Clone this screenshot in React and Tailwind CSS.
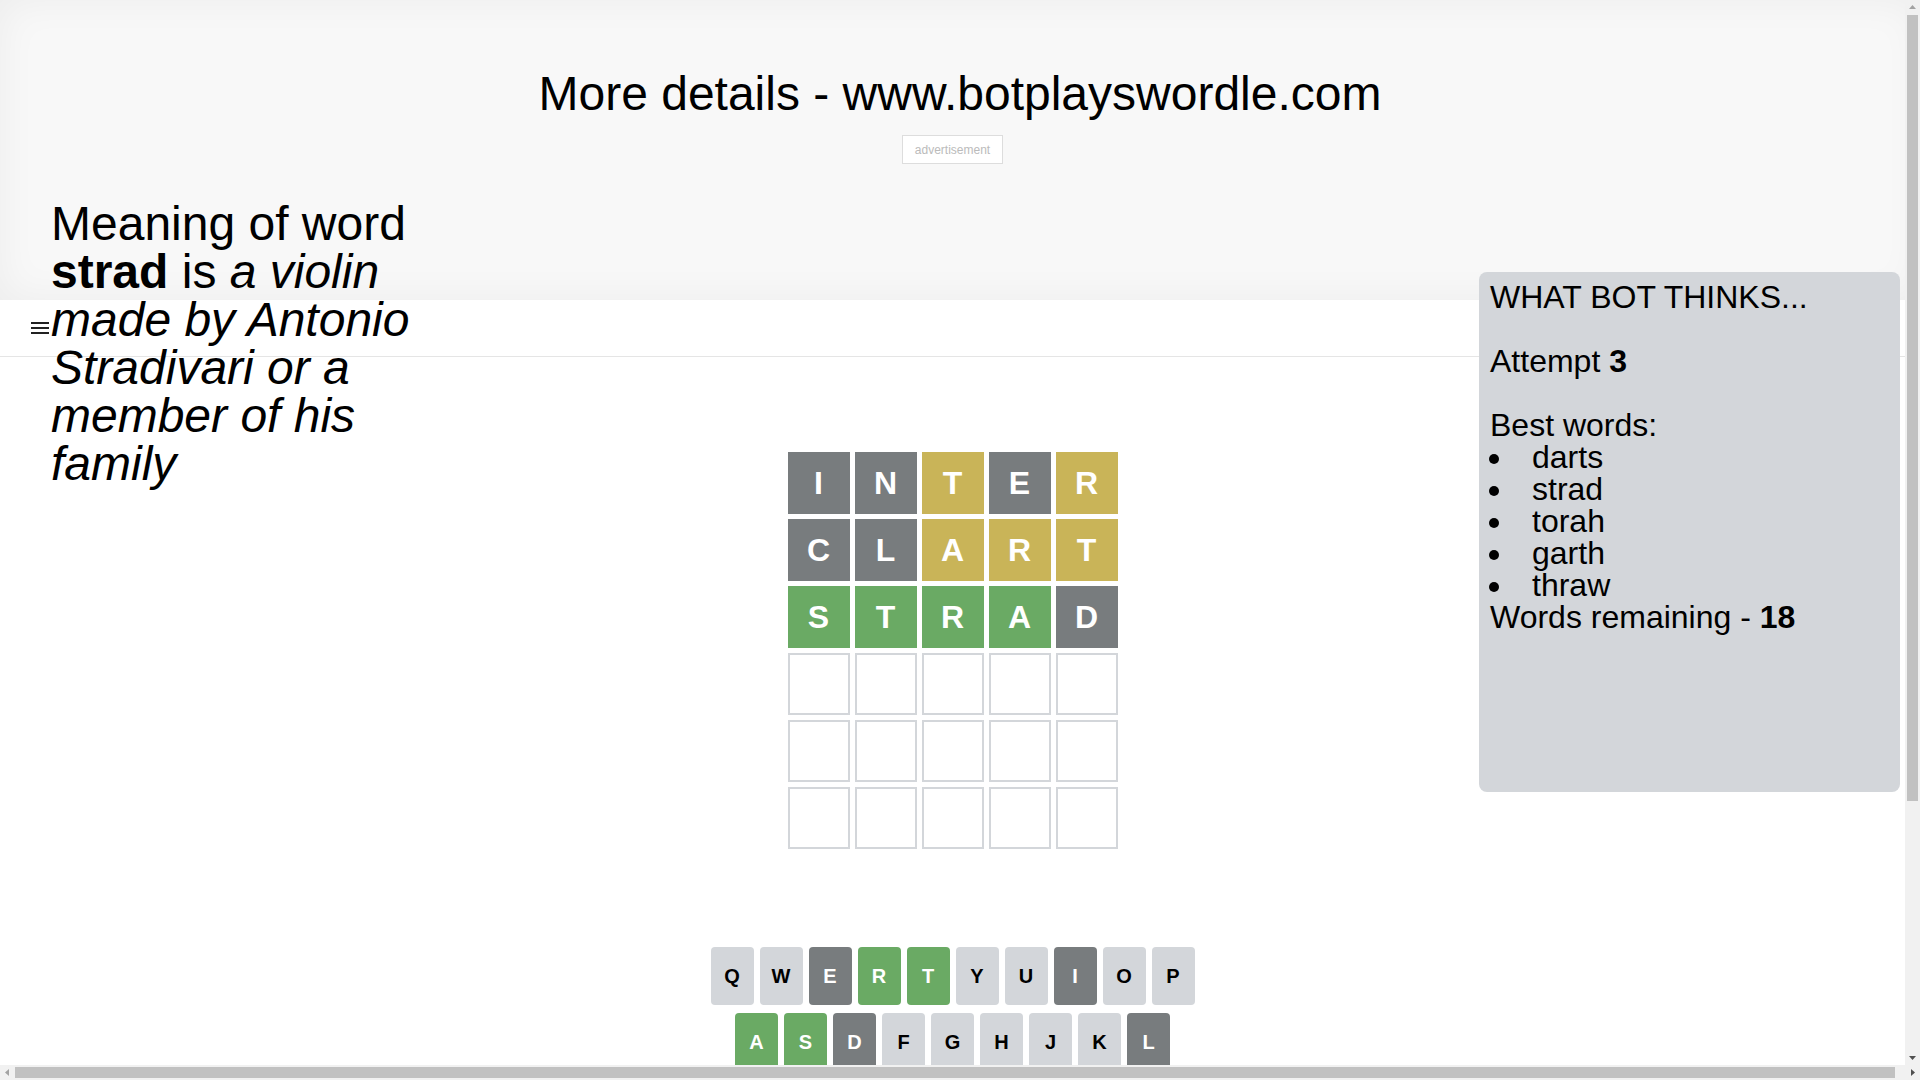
import React from "react";

const GRAY = "bg-[#787c7e] border-[#787c7e] text-white";
const YELLOW = "bg-[#c9b458] border-[#c9b458] text-white";
const GREEN = "bg-[#6aaa64] border-[#6aaa64] text-white";

const guesses = [
  [["I", GRAY], ["N", GRAY], ["T", YELLOW], ["E", GRAY], ["R", YELLOW]],
  [["C", GRAY], ["L", GRAY], ["A", YELLOW], ["R", YELLOW], ["T", YELLOW]],
  [["S", GREEN], ["T", GREEN], ["R", GREEN], ["A", GREEN], ["D", GRAY]],
];

const keyColors = {
  E: "gray", I: "gray", D: "gray", L: "gray", N: "gray", C: "gray",
  R: "green", T: "green", A: "green", S: "green",
};

const keyClass = (k) => {
  const c = keyColors[k];
  if (c === "gray") return "bg-[#787c7e] text-white";
  if (c === "green") return "bg-[#6aaa64] text-white";
  return "bg-[#d3d6da] text-black";
};

const rows = [
  ["Q", "W", "E", "R", "T", "Y", "U", "I", "O", "P"],
  ["A", "S", "D", "F", "G", "H", "J", "K", "L"],
  ["ENTER", "Z", "X", "C", "V", "B", "N", "M", "⌫"],
];

const bestWords = ["darts", "strad", "torah", "garth", "thraw"];

// little scrollbar arrow, points: up / down / left / right
const Arrow = ({ dir, color }) => {
  const pts = {
    up: "4,9 11,9 7.5,5",
    down: "4,6 11,6 7.5,10",
    left: "9,4 9,11 5,7.5",
    right: "6,4 6,11 10,7.5",
  }[dir];
  return (
    <svg width="15" height="15" viewBox="0 0 15 15" className="shrink-0">
      <polygon points={pts} fill={color} />
    </svg>
  );
};

const Tile = ({ letter, color }) => (
  <div
    className={`w-[62px] h-[62px] border-2 flex items-center justify-center text-[32px] font-bold leading-none ${
      color || "border-[#d3d6da] bg-white"
    }`}
  >
    {letter}
  </div>
);

const Board = () => {
  const all = [...guesses];
  while (all.length < 6) all.push([null, null, null, null, null]);
  return (
    <div className="grid grid-rows-6 gap-[5px] w-[330px] mx-auto">
      {all.map((row, i) => (
        <div key={i} className="grid grid-cols-5 gap-[5px]">
          {row.map((cell, j) =>
            cell ? <Tile key={j} letter={cell[0]} color={cell[1]} /> : <Tile key={j} />
          )}
        </div>
      ))}
    </div>
  );
};

const Keyboard = () => (
  <div className="flex flex-col items-center gap-[8px]">
    {rows.map((row, i) => (
      <div key={i} className="flex gap-[6px]">
        {row.map((k) => (
          <button
            key={k}
            className={`h-[58px] ${k.length > 1 ? "w-[66px] text-xs" : "w-[43px] text-[20px]"} rounded-[4px] font-bold flex items-center justify-center ${keyClass(k)}`}
          >
            {k}
          </button>
        ))}
      </div>
    ))}
  </div>
);

const Page = () => (
  <div className="relative min-h-[1400px]">
    {/* top banner */}
    <header className="w-[1920px] h-[300px] bg-[#f8f8f8] shadow-[inset_0_0_40px_rgba(0,0,0,0.05)] pt-[70px]">
      <h1 className="text-5xl leading-none text-center">More details - www.botplayswordle.com</h1>
    </header>

    {/* nav bar */}
    <nav className="h-[57px] border-b border-[#e5e5e5] flex items-center pl-[31px]">
      <svg width="18" height="12" viewBox="0 0 18 12">
        <rect x="0" y="0" width="18" height="2" fill="#222" />
        <rect x="0" y="5" width="18" height="2" fill="#222" />
        <rect x="0" y="10" width="18" height="2" fill="#222" />
      </svg>
    </nav>

    <main className="pt-[95px]">
      <Board />
      <div className="mt-[98px]">
        <Keyboard />
      </div>
    </main>

    {/* ad slot */}
    <div className="absolute top-[135px] inset-x-0 flex justify-center">
      <div className="w-[101px] h-[29px] border border-[#dddddd] bg-white flex items-center justify-center text-xs text-[#bbbbbb]">
        advertisement
      </div>
    </div>

    {/* word meaning */}
    <p className="absolute left-[51px] top-[200px] w-[400px] text-5xl leading-none">
      Meaning of word <b>strad</b> is <i>a violin made by Antonio Stradivari or a member of his family</i>
    </p>

    {/* bot panel */}
    <div className="absolute left-[1479px] top-[272px] w-[421px] h-[520px] rounded-lg bg-[#d3d6da] pt-[9px] pl-[11px] text-[32px] leading-[32px]">
      <div>WHAT BOT THINKS...</div>
      <br />
      <div>
        Attempt <b>3</b>
      </div>
      <br />
      <div>Best words:</div>
      <ul>
        {bestWords.map((w) => (
          <li key={w} className="flex items-center">
            <span className="w-[10px] h-[10px] rounded-full bg-black ml-[-1px] mr-[33px] mt-[4px]" />
            {w}
          </li>
        ))}
      </ul>
      <div>
        Words remaining - <b>18</b>
      </div>
    </div>
  </div>
);

const App = () => {
  return (
    <div className="h-screen w-screen overflow-hidden flex flex-col bg-white text-black font-['Liberation_Sans',Arial,sans-serif]">
      <div className="flex flex-1 min-h-0">
        <div className="flex-1 min-w-0 overflow-hidden">
          <Page />
        </div>
        {/* vertical scrollbar */}
        <div className="w-[15px] bg-[#f1f1f1] flex flex-col">
          <Arrow dir="up" color="#a3a3a3" />
          <div className="h-[786px] mx-[2px] bg-[#c1c1c1]" />
          <div className="flex-1" />
          <Arrow dir="down" color="#505050" />
        </div>
      </div>
      {/* horizontal scrollbar */}
      <div className="h-[15px] bg-[#f1f1f1] flex items-stretch">
        <Arrow dir="left" color="#a3a3a3" />
        <div className="w-[1880px] my-[2px] bg-[#c1c1c1]" />
        <div className="flex-1" />
        <Arrow dir="right" color="#505050" />
      </div>
    </div>
  );
};

export default App;
